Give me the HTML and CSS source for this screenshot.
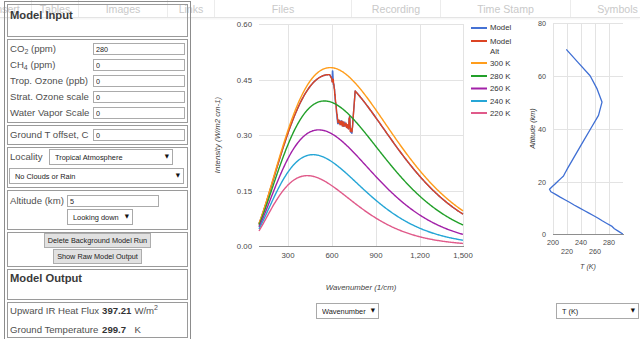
FILE: index.html
```html
<!DOCTYPE html>
<html>
<head>
<meta charset="utf-8">
<title>Model</title>
<link rel="stylesheet" href="styles.css">
</head>
<body>
<div class="toolbar">
  <span class="tb-item tb-insert">Insert</span>
  <span class="tb-item tb-tables">Tables</span>
  <span class="tb-item tb-images">Images</span>
  <span class="tb-item tb-links">Links</span>
  <span class="tb-item tb-files">Files</span>
  <span class="tb-item tb-rec">Recording</span>
  <span class="tb-item tb-time">Time Stamp</span>
  <span class="tb-item tb-sym">Symbols</span>
</div>
<div class="page">
  <div class="panel">
    <div class="cell c-head"><h2 class="heading">Model Input</h2></div>
    <div class="cell c-inputs">
      <div class="frow"><span class="lbl">CO<sub>2</sub> (ppm)</span><input class="txt" value="280"></div>
      <div class="frow"><span class="lbl">CH<sub>4</sub> (ppm)</span><input class="txt" value="0"></div>
      <div class="frow"><span class="lbl">Trop. Ozone (ppb)</span><input class="txt" value="0"></div>
      <div class="frow"><span class="lbl">Strat. Ozone scale</span><input class="txt" value="0"></div>
      <div class="frow"><span class="lbl">Water Vapor Scale</span><input class="txt" value="0"></div>
    </div>
    <div class="cell c-ground">
      <div class="frow"><span class="lbl">Ground T offset, C</span><input class="txt" value="0"></div>
    </div>
    <div class="cell c-loc">
      <div class="loc-row">
        <span class="lbl loc-lbl">Locality</span>
        <div class="sel sel-trop"><select><option>Tropical Atmosphere</option></select></div>
      </div>
      <div class="loc-row">
        <div class="sel sel-cloud"><select><option>No Clouds or Rain</option></select></div>
      </div>
    </div>
    <div class="cell c-alt">
      <span class="lbl">Altitude (km)</span><input class="txt" value="5">
      <div class="sel sel-look"><select><option>Looking down</option></select></div>
    </div>
    <div class="cell c-btn">
      <button class="btn">Delete Background Model Run</button>
      <button class="btn">Show Raw Model Output</button>
    </div>
    <div class="cell c-outhead"><h2 class="heading">Model Output</h2></div>
    <div class="cell c-out">
      <span class="lbl">Upward IR Heat Flux</span><span class="val">397.21</span><span class="unit">W/m<sup>2</sup></span>
      <span class="lbl">Ground Temperature</span><span class="val">299.7</span><span class="unit">K</span>
    </div>
  </div>

  <div class="main-col">
    <svg class="chart" viewBox="195 0 325 300" width="325" height="300">
      <g class="grid">
        <line x1="259" y1="24.5" x2="463" y2="24.5"/>
        <line x1="259" y1="80.5" x2="463" y2="80.5"/>
        <line x1="259" y1="135.5" x2="463" y2="135.5"/>
        <line x1="259" y1="191.5" x2="463" y2="191.5"/>
        <line x1="288.5" y1="24" x2="288.5" y2="246"/>
        <line x1="332.5" y1="24" x2="332.5" y2="246"/>
        <line x1="376.5" y1="24" x2="376.5" y2="246"/>
        <line x1="420.5" y1="24" x2="420.5" y2="246"/>
        <line x1="463.5" y1="24" x2="463.5" y2="246"/>
      </g>
      <line class="base" x1="259" y1="246.5" x2="464" y2="246.5"/>
      <g class="tick">
        <text x="252" y="26.8" text-anchor="end">0.60</text>
        <text x="252" y="82.8" text-anchor="end">0.45</text>
        <text x="252" y="137.8" text-anchor="end">0.30</text>
        <text x="252" y="193.8" text-anchor="end">0.15</text>
        <text x="252" y="248.8" text-anchor="end">0.00</text>
        <text x="288" y="257.8" text-anchor="middle">300</text>
        <text x="332" y="257.8" text-anchor="middle">600</text>
        <text x="376" y="257.8" text-anchor="middle">900</text>
        <text x="420" y="257.8" text-anchor="middle">1,200</text>
        <text x="463" y="257.8" text-anchor="middle">1,500</text>
      </g>
      <text class="axis-title" x="361" y="290" text-anchor="middle">Wavenumber (1/cm)</text>
      <text class="axis-title" transform="translate(219.5,135) rotate(-90)" text-anchor="middle">Intensity (W/m2 cm-1)</text>
      <path id="model" class="curve s-model"/>
      <path id="alt" class="curve s-alt"/>
      <path id="k300" class="curve s-300"/>
      <path id="k280" class="curve s-280"/>
      <path id="k260" class="curve s-260"/>
      <path id="k240" class="curve s-240"/>
      <path id="k220" class="curve s-220"/>
      <g class="legend">
        <line class="s-model" x1="471" y1="28" x2="487" y2="28"/>
        <text x="490" y="30.2">Model</text>
        <line class="s-alt" x1="471" y1="41" x2="487" y2="41"/>
        <text x="490" y="43.8">Model</text>
        <text x="490" y="53.8">Alt</text>
        <line class="s-300" x1="471" y1="63" x2="487" y2="63"/>
        <text x="490" y="65.8">300 K</text>
        <line class="s-280" x1="471" y1="76" x2="487" y2="76"/>
        <text x="490" y="78.8">280 K</text>
        <line class="s-260" x1="471" y1="88.5" x2="487" y2="88.5"/>
        <text x="490" y="91.3">260 K</text>
        <line class="s-240" x1="471" y1="101" x2="487" y2="101"/>
        <text x="490" y="103.8">240 K</text>
        <line class="s-220" x1="471" y1="113" x2="487" y2="113"/>
        <text x="490" y="115.8">220 K</text>
      </g>
    </svg>
    <div class="sel sel-wave"><select><option>Wavenumber</option></select></div>
  </div>

  <div class="side-col">
    <svg class="chart" viewBox="520 0 120 300" width="120" height="300">
      <g class="grid">
        <line x1="553" y1="23.5" x2="623" y2="23.5"/>
        <line x1="553" y1="76.5" x2="623" y2="76.5"/>
        <line x1="553" y1="129.5" x2="623" y2="129.5"/>
        <line x1="553" y1="182.5" x2="623" y2="182.5"/>
        <line x1="553.5" y1="23" x2="553.5" y2="234"/>
        <line x1="567.5" y1="23" x2="567.5" y2="234"/>
        <line x1="581.5" y1="23" x2="581.5" y2="234"/>
        <line x1="595.5" y1="23" x2="595.5" y2="234"/>
        <line x1="609.5" y1="23" x2="609.5" y2="234"/>
      </g>
      <line class="base" x1="553" y1="234.5" x2="624" y2="234.5"/>
      <g class="tick small">
        <text x="546" y="25.6" text-anchor="end">80</text>
        <text x="546" y="78.6" text-anchor="end">60</text>
        <text x="546" y="131.6" text-anchor="end">40</text>
        <text x="546" y="184.6" text-anchor="end">20</text>
        <text x="546" y="236.6" text-anchor="end">0</text>
        <text x="553" y="244.6" text-anchor="middle">200</text>
        <text x="567" y="253.6" text-anchor="middle">220</text>
        <text x="581" y="244.6" text-anchor="middle">240</text>
        <text x="595" y="253.6" text-anchor="middle">260</text>
        <text x="609" y="244.6" text-anchor="middle">280</text>
      </g>
      <text class="axis-title small" x="588" y="268.6" text-anchor="middle">T (K)</text>
      <text class="axis-title small" transform="translate(535,128.5) rotate(-90)" text-anchor="middle">Altitude (km)</text>
      <polyline class="profile" points="622.8,234 618.6,231.4 614.4,228.7 611.6,226.1 606.9,223.5 602.2,220.8 598.2,218.2 593.3,215.5 588.5,212.9 583.7,210.3 578.9,207.6 574.1,205 569.5,202.3 564.9,199.7 560.2,197.1 555.6,194.4 550.9,191.8 549.5,189.2 552.3,186.5 555.1,183.9 557.9,181.3 560.7,178.6 563.5,176 564.9,173.3 566.3,170.7 567.7,168.1 575.4,154.9 583.1,141.7 590.8,128.5 598.5,115.3 602,102.1 597.1,88.9 590.1,75.8 578.2,62.6 566.3,49.4"/>
    </svg>
    <div class="sel sel-t"><select><option>T (K)</option></select></div>
  </div>
</div>
<script src="script.js"></script>
</body>
</html>
```

FILE: styles.css
```css
* { box-sizing: border-box; }
html, body { margin: 0; padding: 0; height: 100%; overflow: hidden; background: #fff; }
body { font-family: "Liberation Sans", Arial, sans-serif; color: #4f4f4f; position: relative; }

.toolbar {
  position: absolute; top: 0; left: 0; width: 640px; height: 18px;
  display: flex; overflow: hidden; background: #fff;
  border-bottom: 1px solid #e4e4e4; box-shadow: 0 1px 2px rgba(0,0,0,0.05);
  z-index: 0;
}
.tb-item {
  flex: none; display: flex; align-items: center; justify-content: center;
  height: 17px; border-right: 1px solid #ececec; color: #c9c9c9; font-size: 10.6px;
}
.tb-insert { width: 50px; margin-left: -18px; }
.tb-tables { width: 47px; }
.tb-images { width: 89px; }
.tb-links { width: 47px; }
.tb-files { width: 137px; }
.tb-rec { width: 89px; }
.tb-time { width: 130px; }
.tb-sym { width: 93px; border-right: none; }

.page { position: relative; z-index: 1; display: flex; align-items: flex-start; padding-left: 4px; }

.panel {
  width: 187px; flex: none; margin-top: 1px; border: 1px solid #8c8c8c; padding: 2px;
  display: flex; flex-direction: column; gap: 2px;
}
.cell { border: 1px solid #9a9a9a; flex: none; }
.heading { margin: 0; font-size: 11.2px; font-weight: bold; color: #3a3a3a; line-height: 13px; }
.c-head { height: 33px; padding: 4px 2px 0; }
.c-inputs { height: 84px; padding: 3px 2px; display: flex; flex-direction: column; gap: 4px; }
.frow { display: grid; grid-template-columns: 83px 92px; align-items: center; height: 12px; }
.lbl { font-size: 9.6px; line-height: 12px; white-space: nowrap; color: #4f4f4f; }
.lbl sub { font-size: 7px; line-height: 0; vertical-align: -2px; }
.txt {
  width: 92px; height: 12px; margin: 0; border: 1px solid #ababab; padding: 0 2px;
  font-family: inherit; font-size: 7.2px; color: #222; background: #fff; outline: none;
}
.c-ground { height: 20px; padding: 3px 2px; }
.c-loc { height: 41px; padding: 1px 1px 3px; display: flex; flex-direction: column; gap: 3px; }
.loc-row { display: flex; align-items: center; }
.loc-lbl { width: 39px; margin-left: 1px; }

.sel { position: relative; height: 16px; flex: none; }
.sel select {
  appearance: none; -webkit-appearance: none; display: block; width: 100%; height: 100%; margin: 0;
  border: 1px solid #a9a9a9; border-radius: 0; background: #fff; color: #222;
  font-family: "Liberation Sans", Arial, sans-serif; font-size: 7.4px; padding: 0 12px 0 5px; outline: none;
}
.sel::after {
  content: "\25BC"; position: absolute; right: 4px; top: 50%; transform: translateY(-50%);
  font-family: "DejaVu Sans", sans-serif; font-size: 5.5px; color: #111; pointer-events: none; line-height: 1;
}
.sel-trop { width: 124px; }
.sel-cloud { width: 175px; }

.c-alt {
  height: 40px; padding: 4px 2px; display: grid; grid-template-columns: 57px 92px;
  grid-template-rows: 12px 16px; row-gap: 2px; align-items: center;
}
.sel-look { width: 66px; grid-column: 2; }

.c-btn { height: 35px; padding: 0 2px 2px; display: flex; flex-direction: column; align-items: center; gap: 1px; }
.btn {
  height: 15px; margin: 0; padding: 0 3px; border: 1px solid #adadad; background: #e1e1e1;
  font-family: "Liberation Sans", Arial, sans-serif; font-size: 7.3px; color: #222; line-height: 13px; border-radius: 0;
}
.c-outhead { height: 31px; padding: 2px 2px 0; }
.c-out {
  height: 36px; padding: 0 2px; display: grid; grid-template-columns: auto auto auto;
  justify-content: start; column-gap: 3px; row-gap: 4px; grid-auto-rows: 15px; align-items: center;
  font-size: 9.6px;
}
.c-out .lbl { font-size: 9.6px; }
.val { font-weight: bold; color: #333; }
.unit { color: #4f4f4f; }
.unit sup { font-size: 7px; line-height: 0; vertical-align: 4px; }

.main-col { width: 325px; flex: none; margin-left: 4px; }
.side-col { width: 120px; flex: none; }
.chart { display: block; }
.sel-wave { width: 63px; margin: 3px 0 0 121px; }
.sel-t { width: 83px; margin: 3px 0 0 36px; }

.chart text { font-family: "Liberation Sans", Arial, sans-serif; fill: #4a4a4a; font-size: 7.8px; }
.chart .tick.small text, .chart text.small { font-size: 7.2px; }
.chart .axis-title { font-style: italic; fill: #444; }
.grid line { stroke: #e3e3e3; stroke-width: 1; }
.base { stroke: #8e8e8e; stroke-width: 1; }
.curve { fill: none; stroke-width: 1.4; stroke-linejoin: round; }
.legend line { stroke-width: 2; }
.legend text { fill: #333; }
.s-model { stroke: #4572d4; }
.s-alt { stroke: #dc4424; }
.s-300 { stroke: #ff9d1c; }
.s-280 { stroke: #22a02a; }
.s-260 { stroke: #a221a8; }
.s-240 { stroke: #26a6d6; }
.s-220 { stroke: #e05a8a; }
.profile { fill: none; stroke: #3f6fd4; stroke-width: 1.3; stroke-linejoin: round; }
```

FILE: script.js
```js
(function () {
  function X(nu) { return 259 + (nu - 100) / 1400 * 204; }
  function Y(v) { return 246 - v / 0.6 * 222; }
  function planck(nu, T) {
    return Math.PI * 1.191042e-8 * nu * nu * nu / (Math.exp(1.438777 * nu / T) - 1);
  }
  function build(fn, step) {
    var d = '';
    for (var nu = 100; nu <= 1500.001; nu += step(nu)) {
      d += (d ? 'L' : 'M') + X(nu).toFixed(2) + ',' + Y(fn(nu)).toFixed(2);
    }
    return d;
  }
  function set(id, d) { document.getElementById(id).setAttribute('d', d); }
  [300, 280, 260, 240, 220].forEach(function (T) {
    set('k' + T, build(function (nu) { return planck(nu, T); }, function () { return 5; }));
  });
  function teff(nu) {
    if (nu < 585) return 296;
    if (nu < 612) return 296 - (nu - 585) / 27 * 4;
    if (nu < 640) return 292 - (nu - 612) / 28 * 22;
    if (nu < 718) return 270 + (nu - 640) / 78 * 3;
    if (nu < 725) return 278;
    if (nu < 738) return 272;
    if (nu < 760) return 272 + (nu - 738) / 22 * 24;
    return 296;
  }
  function rng(seed) {
    var s = seed;
    return function () { s = (s * 16807) % 2147483647; return s / 2147483647; };
  }
  function modelPath(seed, amp, spike) {
    var r = rng(seed);
    return build(function (nu) {
      var T = teff(nu);
      if (nu > 600 && nu < 745) T += (r() - 0.5) * amp;
      if (nu >= 604 && nu <= 608) T += spike;
      return planck(nu, T);
    }, function (nu) { return (nu >= 570 && nu < 780) ? 2 : 5; });
  }
  set('model', modelPath(12345, 3, 4));
  set('alt', modelPath(777, 3, 1));
})();
```
